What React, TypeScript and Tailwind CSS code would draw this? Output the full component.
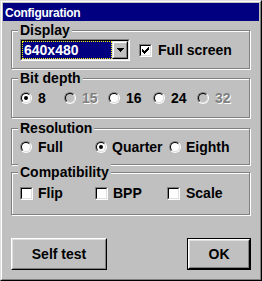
import React from "react";

function Radio({ checked = false, disabled = false }: { checked?: boolean; disabled?: boolean }) {
  return (
    <div className="w-[12px] h-[12px] shrink-0 rounded-full border border-t-[#808080] border-l-[#808080] border-r-white border-b-white">
      <div
        className={`w-full h-full rounded-full border border-t-black border-l-black border-r-[#dfdfdf] border-b-[#dfdfdf] flex items-center justify-center ${
          disabled ? "bg-[#c0c0c0]" : "bg-white"
        }`}
      >
        {checked && <div className="w-[4px] h-[4px] rounded-full bg-black" />}
      </div>
    </div>
  );
}

function CheckMark() {
  return (
    <svg width="7" height="7" viewBox="0 0 7 7" shapeRendering="crispEdges">
      <rect x="6" y="0" width="1" height="1" fill="#000" />
      <rect x="5" y="1" width="2" height="1" fill="#000" />
      <rect x="0" y="2" width="1" height="1" fill="#000" />
      <rect x="4" y="2" width="3" height="1" fill="#000" />
      <rect x="0" y="3" width="2" height="1" fill="#000" />
      <rect x="3" y="3" width="3" height="1" fill="#000" />
      <rect x="0" y="4" width="5" height="1" fill="#000" />
      <rect x="1" y="5" width="3" height="1" fill="#000" />
      <rect x="2" y="6" width="1" height="1" fill="#000" />
    </svg>
  );
}

function Check({ checked = false }: { checked?: boolean }) {
  return (
    <div className="w-[13px] h-[13px] shrink-0 border border-t-[#808080] border-l-[#808080] border-r-white border-b-white">
      <div className="w-full h-full border border-t-black border-l-black border-r-[#dfdfdf] border-b-[#dfdfdf] bg-white flex items-center justify-center">
        {checked && <CheckMark />}
      </div>
    </div>
  );
}

function Group({
  label,
  className,
  children,
}: {
  label: string;
  className: string;
  children: React.ReactNode;
}) {
  return (
    <div
      className={`ml-[8px] w-[239px] border border-[#808080] shadow-[1px_1px_0_#fff,inset_1px_1px_0_#fff] px-[8px] ${className}`}
    >
      <div className="-mt-[9px] -ml-[2px] w-fit bg-[#c0c0c0] px-[2px] text-[14px] leading-[16px] font-bold">
        {label}
      </div>
      {children}
    </div>
  );
}

const disabledText = "text-[#808080] [text-shadow:1px_1px_0_#fff]";

export default function App() {
  return (
    <div className="w-[262px] h-[281px] bg-[#c0c0c0] border border-t-[#dfdfdf] border-l-[#dfdfdf] border-r-black border-b-black font-['Liberation_Sans',Arial,sans-serif] text-black">
      <div className="w-full h-full border border-t-white border-l-white border-r-[#808080] border-b-[#808080] p-[1px]">
        <div className="h-[18px] bg-[#000080] pl-[2px] pt-[3px] text-[12px] leading-[15px] font-bold text-white tracking-[-0.25px]">
          Configuration
        </div>

        <Group label="Display" className="mt-[9px] pb-[7px]">
          <div className="mt-[1px] flex items-center">
            <div className="w-[110px] h-[22px] border border-t-[#808080] border-l-[#808080] border-r-white border-b-white">
              <div className="w-full h-full border border-t-black border-l-black border-r-[#dfdfdf] border-b-[#dfdfdf] bg-white flex">
                <div className="w-[90px] h-full bg-[#000080] border border-dotted border-[#ffff00] pl-[1px] text-[14px] leading-[16px] font-bold text-white flex items-center">
                  640x480
                </div>
                <div className="ml-auto w-[16px] h-full bg-[#c0c0c0] border border-t-[#dfdfdf] border-l-[#dfdfdf] border-r-black border-b-black">
                  <div className="w-full h-full border border-t-white border-l-white border-r-[#808080] border-b-[#808080] flex items-center justify-center">
                    <svg width="7" height="4" viewBox="0 0 7 4" shapeRendering="crispEdges">
                      <rect x="0" y="0" width="7" height="1" fill="#000" />
                      <rect x="1" y="1" width="5" height="1" fill="#000" />
                      <rect x="2" y="2" width="3" height="1" fill="#000" />
                      <rect x="3" y="3" width="1" height="1" fill="#000" />
                    </svg>
                  </div>
                </div>
              </div>
            </div>
            <div className="ml-[9px] flex items-center">
              <Check checked />
              <span className="ml-[6px] text-[14px] leading-[16px] font-bold">Full screen</span>
            </div>
          </div>
        </Group>

        <Group label="Bit depth" className="mt-[9px] pb-[11px]">
          <div className="mt-[4px] h-[16px] flex items-center text-[14px] leading-[16px] font-bold">
            <div className="w-[44px] flex items-center">
              <Radio checked />
              <span className="ml-[6px]">8</span>
            </div>
            <div className="w-[44px] flex items-center">
              <Radio disabled />
              <span className={`ml-[6px] ${disabledText}`}>15</span>
            </div>
            <div className="w-[45px] flex items-center">
              <Radio />
              <span className="ml-[6px]">16</span>
            </div>
            <div className="w-[44px] flex items-center">
              <Radio />
              <span className="ml-[6px]">24</span>
            </div>
            <div className="flex items-center">
              <Radio disabled />
              <span className={`ml-[6px] ${disabledText}`}>32</span>
            </div>
          </div>
        </Group>

        <Group label="Resolution" className="mt-[10px] pb-[9px]">
          <div className="mt-[3px] h-[16px] flex items-center text-[14px] leading-[16px] font-bold">
            <div className="w-[75px] flex items-center">
              <Radio />
              <span className="ml-[6px]">Full</span>
            </div>
            <div className="w-[74px] flex items-center">
              <Radio checked />
              <span className="ml-[5px]">Quarter</span>
            </div>
            <div className="flex items-center">
              <Radio />
              <span className="ml-[5px]">Eighth</span>
            </div>
          </div>
        </Group>

        <Group label="Compatibility" className="mt-[7px] pb-[13px]">
          <div className="mt-[5px] h-[16px] flex items-center text-[14px] leading-[16px] font-bold">
            <div className="w-[75px] flex items-center">
              <Check />
              <span className="ml-[5px]">Flip</span>
            </div>
            <div className="w-[72px] flex items-center">
              <Check />
              <span className="ml-[5px]">BPP</span>
            </div>
            <div className="flex items-center">
              <Check />
              <span className="ml-[6px]">Scale</span>
            </div>
          </div>
        </Group>

        <div className="mt-[23px] ml-[8px] w-[240px] flex justify-between text-[14px] leading-[16px] font-bold">
          <div className="w-[96px] h-[32px] border border-t-white border-l-white border-r-black border-b-black">
            <div className="w-full h-full border border-t-[#dfdfdf] border-l-[#dfdfdf] border-r-[#808080] border-b-[#808080] flex items-center justify-center">
              Self test
            </div>
          </div>
          <div className="w-[64px] h-[32px] border border-black">
            <div className="w-full h-full border border-t-white border-l-white border-r-black border-b-black">
              <div className="w-full h-full border border-t-[#dfdfdf] border-l-[#dfdfdf] border-r-[#808080] border-b-[#808080] flex items-center justify-center">
                OK
              </div>
            </div>
          </div>
        </div>
      </div>
    </div>
  );
}
